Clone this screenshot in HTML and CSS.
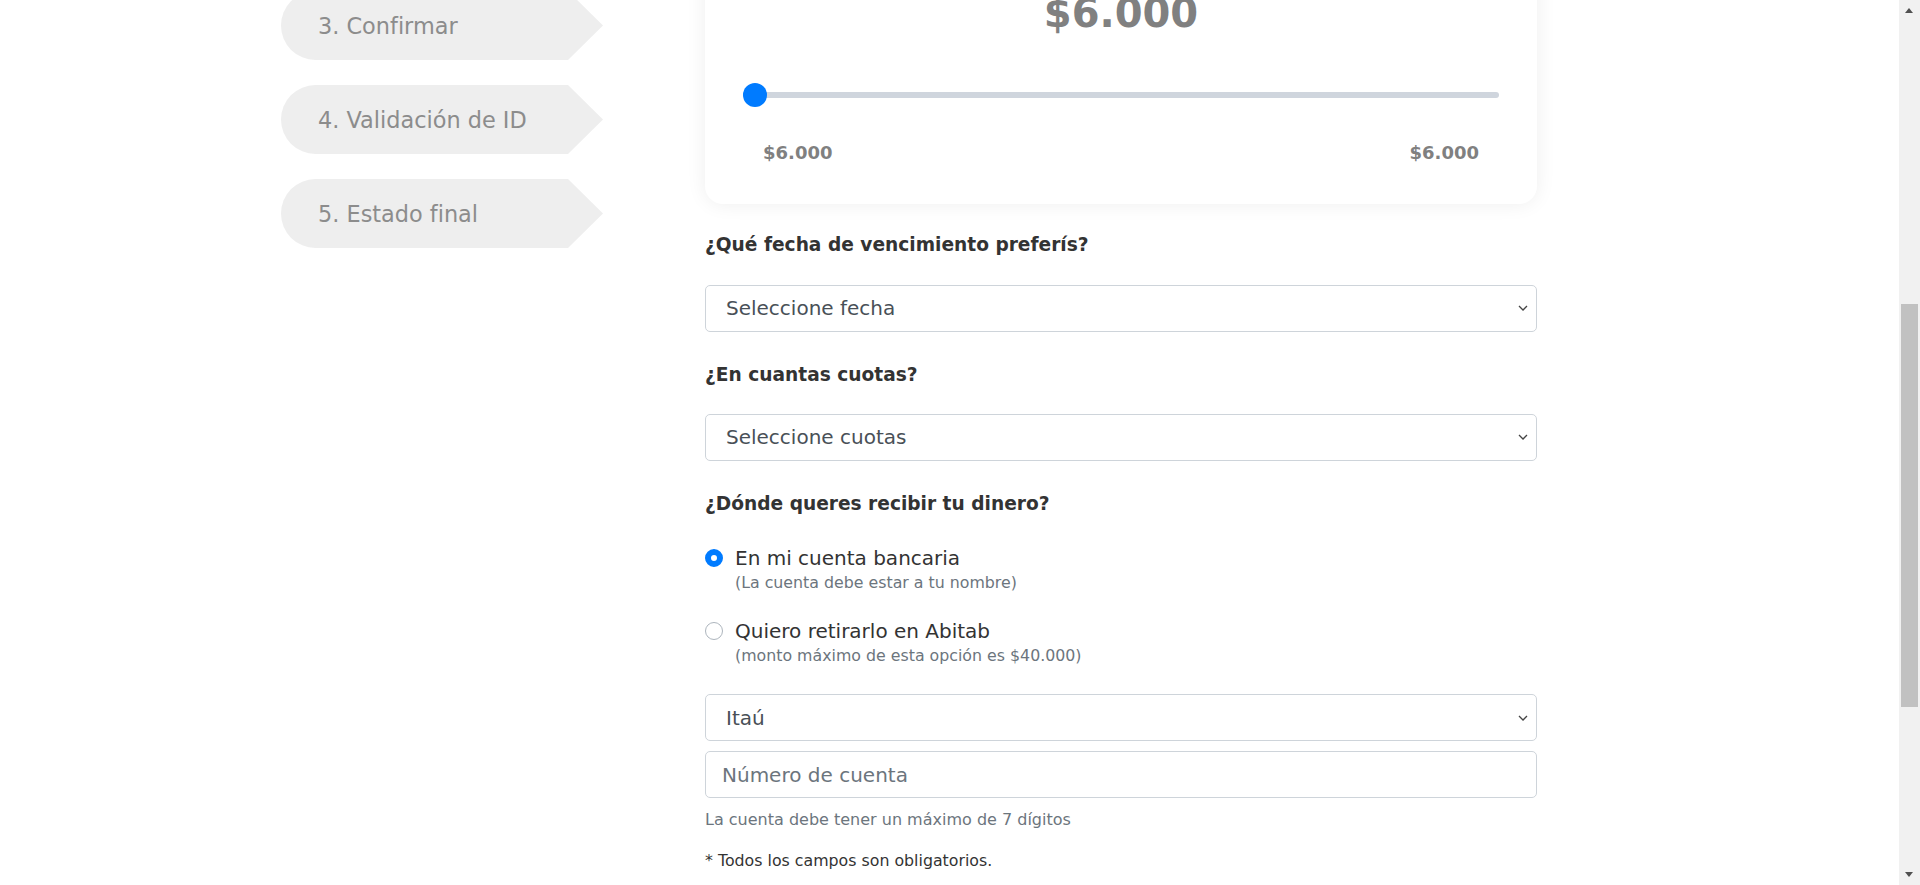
FILE: index.html
```html
<!DOCTYPE html>
<html lang="es">
<head>
<meta charset="utf-8">
<title>Solicitud de préstamo</title>
<link rel="stylesheet" href="styles.css">
</head>
<body>
<header class="topbar">
  <div class="brand">Préstamos</div>
</header>
<section class="hero">
  <h1 class="hero-title">Solicitá tu préstamo</h1>
  <p class="hero-sub">Completá los pasos para recibir tu dinero</p>
</section>
<main class="container">
  <aside class="steps">
    <div class="step">1. Datos personales</div>
    <div class="step">2. Préstamo</div>
    <div class="step">3. Confirmar</div>
    <div class="step">4. Validación de ID</div>
    <div class="step">5. Estado final</div>
  </aside>
  <section class="form-col">
    <h2 class="form-title">Datos del préstamo</h2>
    <div class="card">
      <p class="card-title">¿Cuánto dinero necesitás?</p>
      <p class="card-sub">Elegí el monto deslizando la barra</p>
      <div class="amount">$6.000</div>
      <input class="range" type="range" min="6000" max="40000" value="6000">
      <div class="range-labels"><span>$6.000</span><span>$6.000</span></div>
    </div>

    <h3 class="question question-first">¿Qué fecha de vencimiento preferís?</h3>
    <select class="control"><option>Seleccione fecha</option></select>

    <h3 class="question">¿En cuantas cuotas?</h3>
    <select class="control"><option>Seleccione cuotas</option></select>

    <h3 class="question">¿Dónde queres recibir tu dinero?</h3>
    <div class="options">
      <label class="option">
        <span class="option-row"><input class="radio" type="radio" name="dest" checked><span class="option-label">En mi cuenta bancaria</span></span>
        <span class="option-sub">(La cuenta debe estar a tu nombre)</span>
      </label>
      <label class="option">
        <span class="option-row"><input class="radio" type="radio" name="dest"><span class="option-label">Quiero retirarlo en Abitab</span></span>
        <span class="option-sub">(monto máximo de esta opción es $40.000)</span>
      </label>
    </div>

    <select class="control control-bank"><option>Itaú</option></select>
    <input class="control control-input" type="text" placeholder="Número de cuenta">
    <p class="help">La cuenta debe tener un máximo de 7 dígitos</p>
    <p class="note">* Todos los campos son obligatorios.</p>
    <div class="actions"><button class="btn" type="button">Continuar</button></div>
  </section>
</main>
<footer class="footer">
  <p>© Préstamos. Todos los derechos reservados.</p>
</footer>
<div class="scrollbar" aria-hidden="true">
  <span class="sb-arrow sb-up"></span>
  <span class="sb-thumb"></span>
  <span class="sb-arrow sb-down"></span>
</div>
<script src="script.js"></script>
</body>
</html>
```

FILE: styles.css
```css
html { scroll-behavior: auto; }
* { box-sizing: border-box; }
body {
  margin: 0;
  font-family: "DejaVu Sans", sans-serif;
  color: #333;
  background: #fff;
}
p { margin: 0; }

.topbar {
  height: 80px;
  display: flex;
  align-items: center;
  padding: 0 60px;
  border-bottom: 1px solid #eee;
}
.brand { font-size: 24px; font-weight: bold; color: #007bff; }

.hero {
  height: 353px;
  display: flex;
  flex-direction: column;
  align-items: center;
  justify-content: center;
  gap: 12px;
}
.hero-title { margin: 0; font-size: 34px; color: #333; }
.hero-sub { font-size: 18px; color: #777; }

.container {
  width: 1358px;
  margin: 0 auto;
  padding-bottom: 60px;
  display: grid;
  grid-template-columns: 322px 832px;
  column-gap: 102px;
  align-items: start;
}

.steps {
  display: flex;
  flex-direction: column;
  gap: 25px;
}
.step {
  height: 69px;
  width: 322px;
  padding-left: 37px;
  display: flex;
  align-items: center;
  font-size: 22.4px;
  color: #8c8c8c;
  background: #eeeeee;
  border-radius: 34.5px 0 0 34.5px;
  clip-path: polygon(0 0, calc(100% - 35px) 0, 100% 50%, calc(100% - 35px) 100%, 0 100%);
}

.form-col { display: flex; flex-direction: column; }
.form-title {
  margin: 0 0 24px;
  font-size: 28px;
  line-height: 40px;
  color: #333;
}

.card {
  background: #fff;
  border-radius: 18px;
  box-shadow: 0 0 20px rgba(0, 0, 0, 0.07);
  padding: 32px 38px 39px;
  text-align: center;
}
.card-title { font-size: 20px; line-height: 27px; font-weight: bold; color: #333; margin-bottom: 8px; }
.card-sub { font-size: 16px; line-height: 24px; color: #777; margin-bottom: 30.5px; }
.amount {
  font-size: 40px;
  line-height: 48px;
  font-weight: bold;
  color: #808080;
  margin-bottom: 46px;
}
.range {
  -webkit-appearance: none;
  appearance: none;
  display: block;
  width: 100%;
  height: 24px;
  margin: 0;
  background: transparent;
}
.range::-webkit-slider-runnable-track {
  height: 6px;
  background: #cfd5dd;
  border-radius: 3px;
}
.range::-webkit-slider-thumb {
  -webkit-appearance: none;
  appearance: none;
  width: 24px;
  height: 24px;
  margin-top: -9px;
  border: none;
  border-radius: 50%;
  background: #007bff;
}
.range-labels {
  margin-top: 34px;
  padding: 0 20px;
  display: flex;
  justify-content: space-between;
  font-size: 18px;
  line-height: 24px;
  font-weight: bold;
  color: #808080;
}

.question {
  margin: 29px 0 26px;
  font-size: 18.6px;
  line-height: 27px;
  font-weight: bold;
  color: #333;
}
.question-first { margin-top: 27px; margin-bottom: 27px; }

.control {
  -webkit-appearance: none;
  appearance: none;
  display: block;
  width: 100%;
  height: 47px;
  padding: 0 36px 0 20px;
  font-family: "DejaVu Sans", sans-serif;
  font-size: 20px;
  color: #495057;
  background-color: #fff;
  background-image: url("data:image/svg+xml,%3Csvg xmlns='http://www.w3.org/2000/svg' width='10' height='6' viewBox='0 0 10 6'%3E%3Cpath d='M1 1l4 4 4-4' fill='none' stroke='%23444' stroke-width='1.3'/%3E%3C/svg%3E");
  background-repeat: no-repeat;
  background-position: right 8px center;
  background-size: 10px 6px;
  border: 1px solid #ced4da;
  border-radius: 5px;
}
.control-input { background-image: none; padding-left: 16px; }
.control-input::placeholder { color: #6c757d; }

.options { padding-top: 1px; display: flex; flex-direction: column; gap: 23px; }
.option { display: flex; flex-direction: column; cursor: pointer; }
.option-row { display: flex; align-items: center; gap: 12px; }
.radio {
  -webkit-appearance: none;
  appearance: none;
  margin: 0;
  width: 18px;
  height: 18px;
  border-radius: 50%;
  border: 1px solid #adb5bd;
  background: #fff;
  flex: none;
}
.radio:checked { border: 6px solid #007bff; }
.option-label { font-size: 20px; line-height: 28px; color: #333; }
.option-sub { padding-left: 30px; font-size: 15.8px; line-height: 22px; color: #6c757d; }

.control-bank { margin-top: 27.5px; }
.control-input { margin-top: 10px; }
.help { margin-top: 10px; font-size: 16px; line-height: 23px; color: #6c757d; }
.note { margin-top: 18px; font-size: 15.8px; line-height: 23px; color: #333; }

.actions { margin-top: 32px; }
.btn {
  height: 50px;
  padding: 0 40px;
  border: none;
  border-radius: 25px;
  background: #007bff;
  color: #fff;
  font-family: "DejaVu Sans", sans-serif;
  font-size: 18px;
}

.footer {
  height: 225px;
  background: #f5f5f5;
  display: flex;
  align-items: center;
  justify-content: center;
  color: #888;
  font-size: 14px;
}

.scrollbar {
  position: fixed;
  top: 0;
  right: 0;
  width: 21px;
  height: 100vh;
  background: #f1f1f1;
}
.sb-thumb {
  position: absolute;
  left: 2px;
  right: 2px;
  top: 304px;
  height: 403px;
  background: #c1c1c1;
}
.sb-arrow {
  position: absolute;
  left: 6px;
  width: 0;
  height: 0;
  border-left: 4.5px solid transparent;
  border-right: 4.5px solid transparent;
}
.sb-up { top: 8px; border-bottom: 5px solid #505050; }
.sb-down { bottom: 8px; border-top: 5px solid #505050; }
```

FILE: script.js
```js
function goToForm() {
  window.scrollTo(0, 630);
}
if ('scrollRestoration' in history) { history.scrollRestoration = 'manual'; }
goToForm();
document.addEventListener('DOMContentLoaded', goToForm);
window.addEventListener('load', goToForm);
```
